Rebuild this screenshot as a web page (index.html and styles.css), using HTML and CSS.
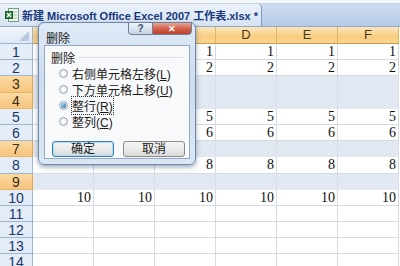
FILE: index.html
```html
<!DOCTYPE html>
<html lang="zh-CN">
<head>
    <meta charset="UTF-8">
    <title>删除</title>
    <link rel="stylesheet" href="styles.css">
</head>
<body>
    <div class="window">
        <div class="topline"></div>
        <div class="tabbar">
            <div class="tab">
                <svg class="xl-icon" width="14" height="14" viewBox="0 0 14 14">
                    <rect x="3.5" y="0.5" width="10" height="13" fill="#f4f8f2" stroke="#7a9a84"/>
                    <path d="M6 4h6M6 7h6M6 10h6" stroke="#9bbf9f"/>
                    <rect x="0.5" y="3.5" width="7" height="7" fill="#2f8a3c" stroke="#1d5e28"/>
                    <path d="M2 5l4 4M6 5l-4 4" stroke="#fff" stroke-width="1.3"/>
                </svg>
                <span class="tab-title">新建 Microsoft Office Excel 2007 工作表.xlsx *</span>
            </div>
        </div>

        <div class="sheet" id="sheet"></div>

        <!-- 删除 dialog floats over the grid -->
        <div class="dialog">
            <div class="dlg-head">
                <span class="dlg-title">删除</span>
                <div class="dlg-buttons">
                    <span class="cap-btn help">?</span>
                    <span class="cap-btn close">✕</span>
                </div>
            </div>
            <div class="dlg-body">
                <div class="group-label">删除</div>
                <ul class="options">
                    <li><span class="radio"></span><span>右侧单元格左移(<u>L</u>)</span></li>
                    <li><span class="radio"></span><span>下方单元格上移(<u>U</u>)</span></li>
                    <li><span class="radio checked"></span><span class="focus">整行(<u>R</u>)</span></li>
                    <li><span class="radio"></span><span>整列(<u>C</u>)</span></li>
                </ul>
                <div class="actions">
                    <button class="btn default">确定</button>
                    <button class="btn">取消</button>
                </div>
            </div>
        </div>
    </div>

    <script>
        // build the grid: header row + 14 rows, 6 columns
        const sheet = document.getElementById('sheet');
        const cols = ['A', 'B', 'C', 'D', 'E', 'F'];
        const selectedRows = [3, 4, 7, 9];
        const values = { 1: 1, 2: 2, 5: 5, 6: 6, 8: 8, 10: 10 };

        function cell(cls, text) {
            const d = document.createElement('div');
            d.className = cls;
            if (text !== undefined) d.textContent = text;
            sheet.appendChild(d);
        }

        cell('corner');
        cols.forEach(c => cell('col-head', c));

        for (let r = 1; r <= 14; r++) {
            const sel = selectedRows.includes(r);
            cell(sel ? 'row-head sel' : 'row-head', r);
            cols.forEach((c, i) => {
                // rows above 10 only hold values from column C on
                const v = (r < 10 && i < 2) ? undefined : values[r];
                cell(sel ? 'cell sel' : 'cell', v);
            });
        }
    </script>
</body>
</html>
```

FILE: styles.css
```css
* {
    box-sizing: border-box;
    margin: 0;
    padding: 0;
}
body {
    width: 400px;
    height: 266px;
    overflow: hidden;
    background: #fff;
    font-family: "Liberation Sans", "Noto Sans CJK SC", sans-serif;
}
.window {
    position: relative;
    width: 400px;
    height: 266px;
    overflow: hidden;
}
.topline {
    height: 4px;
    background: #f4f6f9;
    border-bottom: 1px solid #c9d6e6;
}
.tabbar {
    height: 23px;
    background: linear-gradient(#cddcef, #b5cbe8);
    border-bottom: 1px solid #8ea8ca;
    display: flex;
    align-items: flex-end;
}
.tab {
    width: 262px;
    height: 22px;
    display: flex;
    align-items: center;
    gap: 3px;
    padding-left: 5px;
    background: linear-gradient(#eaf1fa, #d6e3f3);
    border-right: 1px solid #7f9cc4;
    border-radius: 0 4px 0 0;
}
.xl-icon {
    flex-shrink: 0;
}
.tab-title {
    font-size: 11px;
    font-weight: bold;
    color: #17387a;
    white-space: nowrap;
}

/* grid */
.sheet {
    display: grid;
    grid-template-columns: 33px repeat(6, 61px);
    grid-template-rows: 17px;
    grid-auto-rows: 16.2px;
    font-size: 13px;
}
.corner {
    background: linear-gradient(#f3f7fc, #dde7f4);
    border-right: 1px solid #9eb6ce;
    border-bottom: 1px solid #9eb6ce;
    position: relative;
}
.corner::after {
    content: "";
    position: absolute;
    right: 3px;
    bottom: 2px;
    border-left: 10px solid transparent;
    border-bottom: 10px solid #b8c8dc;
}
.col-head {
    background: linear-gradient(#fce6bd, #f8cd80 60%, #f9d592);
    border-right: 1px solid #e3b35d;
    border-bottom: 1px solid #c99b4a;
    color: #4a3a1a;
    text-align: center;
    line-height: 16px;
    font-size: 13px;
}
.row-head {
    background: #e4ecf7;
    border-right: 1px solid #9eb6ce;
    border-bottom: 1px solid #9eb6ce;
    color: #15376b;
    text-align: center;
    font-size: 14px;
    line-height: 16px;
}
.row-head.sel {
    background: linear-gradient(#fbd9a2, #f6c57e);
    border-right-color: #e0a94f;
    border-bottom-color: #e8b66a;
    color: #3b2b10;
}
.cell {
    border-right: 1px solid #d4dbe6;
    border-bottom: 1px solid #d4dbe6;
    text-align: right;
    padding-right: 2px;
    line-height: 16px;
    color: #111;
    font-family: "Liberation Serif", serif;
    font-size: 14px;
}
.cell.sel {
    background: #e2e8f1;
    border-right-color: #d8dfe9;
    border-bottom-color: #e2e8f1;
}

/* dialog */
.dialog {
    position: absolute;
    left: 38px;
    top: 22px;
    width: 158px;
    height: 143px;
    border: 1px solid #6f88a8;
    border-radius: 6px;
    background: linear-gradient(#e0eaf6, #cddcef 40%, #dce7f4);
    box-shadow: 0 2px 5px rgba(40, 60, 90, 0.45);
    padding: 0 5px 5px 5px;
    display: flex;
    flex-direction: column;
}
.dlg-head {
    height: 22px;
    display: flex;
    align-items: flex-start;
    justify-content: space-between;
}
.dlg-title {
    font-size: 12px;
    color: #1a1a1a;
    margin-top: 6px;
    margin-left: 2px;
}
.dlg-buttons {
    display: flex;
    margin-top: -1px;
    margin-right: -2px;
}
.cap-btn {
    height: 13px;
    border: 1px solid #6d7f99;
    display: flex;
    align-items: center;
    justify-content: center;
    font-size: 10px;
    font-weight: bold;
}
.cap-btn.help {
    width: 24px;
    border-radius: 0 0 0 4px;
    background: linear-gradient(#eef3f9, #c6d4e6);
    color: #3d4e68;
    border-right: none;
}
.cap-btn.close {
    width: 40px;
    border-radius: 0 0 4px 0;
    background: linear-gradient(#e8a597, #d2624c 50%, #c1412d);
    color: #fff;
    font-size: 9px;
}
.dlg-body {
    flex: 1;
    background: #f8f9fb;
    border: 1px solid #94a8c3;
    padding: 4px 0 0 6px;
    display: flex;
    flex-direction: column;
    font-size: 12px;
    color: #1a1a1a;
}
.group-label {
    display: flex;
    align-items: center;
    gap: 4px;
    height: 14px;
}
.group-label::after {
    content: "";
    flex: 1;
    border-top: 1px solid #dcdfe4;
    margin-right: 6px;
}
.options {
    list-style: none;
    margin: 1px 0 0 8px;
    display: flex;
    flex-direction: column;
}
.options li {
    height: 16px;
    display: flex;
    align-items: center;
    gap: 4px;
    white-space: nowrap;
}
.radio {
    width: 9px;
    height: 9px;
    border-radius: 50%;
    border: 1px solid #9aa3ae;
    background: radial-gradient(#fff, #dde2e8);
    display: inline-flex;
    align-items: center;
    justify-content: center;
}
.radio.checked::after {
    content: "";
    width: 5px;
    height: 5px;
    border-radius: 50%;
    background: radial-gradient(circle at 35% 35%, #8fd0f7, #1d5f9c);
}
.focus {
    outline: 1px dotted #333;
    outline-offset: 0;
}
.actions {
    display: flex;
    gap: 9px;
    margin-top: 12px;
    margin-left: 1px;
}
.btn {
    width: 62px;
    height: 16px;
    font-family: "Liberation Sans", "Noto Sans CJK SC", sans-serif;
    font-size: 12px;
    color: #1a1a1a;
    border: 1px solid #8a8a8a;
    border-radius: 3px;
    background: linear-gradient(#f4f4f4, #ebebeb 50%, #d9d9d9);
    line-height: 14px;
}
.btn.default {
    border-color: #3c7fb1;
    box-shadow: inset 0 0 0 1px #a8def5;
}
```
